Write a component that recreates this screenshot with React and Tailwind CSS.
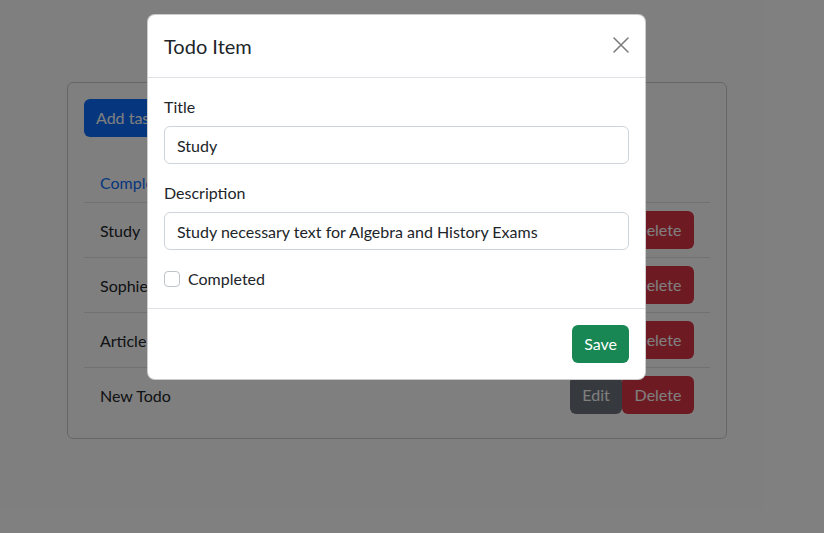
import React from 'react';

const todos = ['Study', 'Sophie', 'Article', 'New Todo'];

export default function App() {
  return (
    <div className="relative min-h-[533px] bg-white text-[#212529] text-base" style={{ fontFamily: "Lato, 'Noto Sans', sans-serif" }}>
      {/* page behind the modal */}
      <div className="pt-[82px] pl-[67px]">
        <div className="w-[660px] rounded-md border border-black/20 p-4">
          <button className="h-[38px] px-3 rounded-md bg-[#0d6efd] text-white leading-6">Add task</button>
          <ul className="mt-[25px] flex border-b border-[#dee2e6]">
            <li className="px-4 py-2 leading-6 text-[#0d6efd] translate-y-px">Completed</li>
          </ul>
          <div>
            {todos.map((t, i) => (
              <div key={t} className={`flex items-center justify-between px-4 py-2 ${i < todos.length - 1 ? 'border-b border-[#dee2e6]' : ''}`}>
                <span className="leading-6 translate-y-px">{t}</span>
                <div className="flex">
                  <button className="h-[38px] w-[52px] rounded-md bg-[#6c757d] text-white">Edit</button>
                  <button className="h-[38px] w-[72px] rounded-md bg-[#dc3545] text-white">Delete</button>
                </div>
              </div>
            ))}
          </div>
        </div>
      </div>

      {/* backdrop */}
      <div className="absolute inset-0 bg-black/50" />

      {/* modal */}
      <div className="absolute left-[147px] top-[14px] w-[499px] rounded-lg border border-black/20 bg-white">
        <div className="flex items-center justify-between px-4 py-4 border-b border-[#dee2e6]">
          <h5 className="text-xl leading-[30px] text-[#212529]">Todo Item</h5>
          <button className="mr-[-4px] mb-[3px] p-1 opacity-50">
            <svg width="16" height="16" viewBox="0 0 16 16" stroke="#000" strokeWidth="1.6" strokeLinecap="round">
              <path d="M1 1L15 15M15 1L1 15" />
            </svg>
          </button>
        </div>
        <div className="p-4">
          <label className="block mb-2 leading-6 translate-y-px">Title</label>
          <div className="h-[38px] mb-4 flex items-center px-3 rounded-md border border-[#ced4da]">
            <span className="translate-y-px">Study</span>
          </div>
          <label className="block mb-2 leading-6 translate-y-px">Description</label>
          <div className="h-[38px] mb-4 flex items-center px-3 rounded-md border border-[#ced4da]">
            <span className="translate-y-px">Study necessary text for Algebra and History Exams</span>
          </div>
          <div className="flex items-center gap-2 h-6 mb-0.5">
            <span className="w-4 h-4 rounded border border-[#bfc4c9] bg-white translate-y-px" />
            <span className="leading-6 translate-y-px">Completed</span>
          </div>
        </div>
        <div className="flex justify-end px-3 py-3 border-t border-[#dee2e6]">
          <button className="m-1 h-[38px] px-3 rounded-md bg-[#198754] text-white">Save</button>
        </div>
      </div>
    </div>
  );
}
